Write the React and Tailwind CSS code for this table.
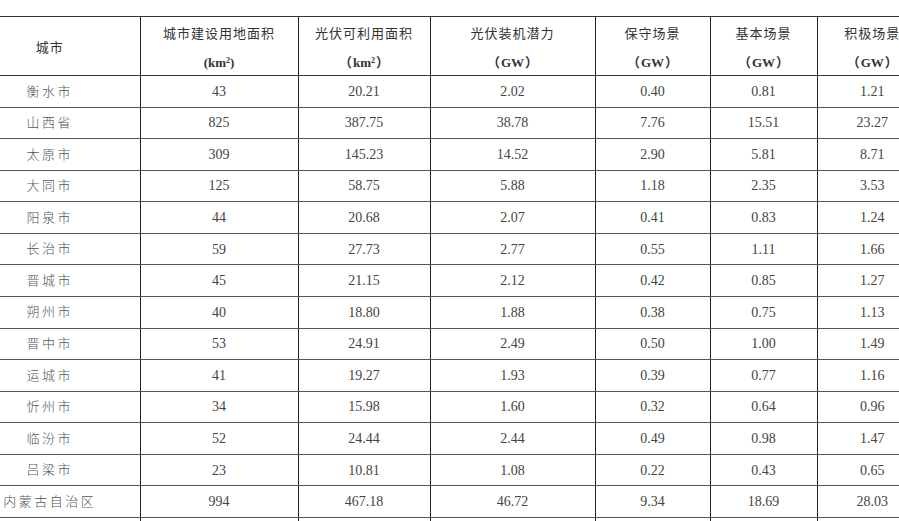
import React from "react";

const rows = [
  ["衡水市", "43", "20.21", "2.02", "0.40", "0.81", "1.21"],
  ["山西省", "825", "387.75", "38.78", "7.76", "15.51", "23.27"],
  ["太原市", "309", "145.23", "14.52", "2.90", "5.81", "8.71"],
  ["大同市", "125", "58.75", "5.88", "1.18", "2.35", "3.53"],
  ["阳泉市", "44", "20.68", "2.07", "0.41", "0.83", "1.24"],
  ["长治市", "59", "27.73", "2.77", "0.55", "1.11", "1.66"],
  ["晋城市", "45", "21.15", "2.12", "0.42", "0.85", "1.27"],
  ["朔州市", "40", "18.80", "1.88", "0.38", "0.75", "1.13"],
  ["晋中市", "53", "24.91", "2.49", "0.50", "1.00", "1.49"],
  ["运城市", "41", "19.27", "1.93", "0.39", "0.77", "1.16"],
  ["忻州市", "34", "15.98", "1.60", "0.32", "0.64", "0.96"],
  ["临汾市", "52", "24.44", "2.44", "0.49", "0.98", "1.47"],
  ["吕梁市", "23", "10.81", "1.08", "0.22", "0.43", "0.65"],
  ["内蒙古自治区", "994", "467.18", "46.72", "9.34", "18.69", "28.03"],
  ["", "", "", "", "", "", ""],
];

const widths = ["w-[140px]", "w-[158px]", "w-[132px]", "w-[165px]", "w-[115px]", "w-[107px]", "w-[110px]"];

const serif = { fontFamily: '"Liberation Serif", "Noto Sans CJK SC", serif' };

function Head({ top, bottom, i }) {
  return (
    <th
      className={`${widths[i]} h-[59px] border-t border-b border-[#333] ${i > 0 ? "border-l border-l-[#222]" : ""} p-0 align-middle font-normal`}
    >
      <div className="flex flex-col items-center leading-[29px] translate-y-[2px]">
        <span className="text-[13px] tracking-[1px] text-[#333]" style={serif}>{top}</span>
        {bottom}
      </div>
    </th>
  );
}

const unit = "text-[13px] font-bold text-[#333] whitespace-nowrap";

function Full({ children }) {
  return (
    <span className={unit}>
      <span className="inline-block w-[17px] text-right pr-[1px]">（</span>
      {children}
      <span className="inline-block w-[17px] text-left pl-[1px]">）</span>
    </span>
  );
}

export default function App() {
  return (
    <div className="w-[899px] h-[521px] overflow-hidden bg-white pt-[16px]" style={serif}>
      <table className="table-fixed border-collapse w-[927px]">
        <thead>
          <tr>
            <th className="w-[140px] h-[59px] border-t border-b border-[#333] p-0 pr-[40px] font-normal align-middle">
              <span className="text-[13px] tracking-[1px] text-[#333] relative top-[1px]">城市</span>
            </th>
            <Head
              i={1}
              top="城市建设用地面积"
              bottom={
                <span className={unit}>
                  (km<sup className="text-[8px]">2</sup>)
                </span>
              }
            />
            <Head
              i={2}
              top="光伏可利用面积"
              bottom={
                <Full>
                  km<sup className="text-[8px]">2</sup>
                </Full>
              }
            />
            <Head i={3} top="光伏装机潜力" bottom={<Full>GW</Full>} />
            <Head i={4} top="保守场景" bottom={<Full>GW</Full>} />
            <Head i={5} top="基本场景" bottom={<Full>GW</Full>} />
            <Head i={6} top="积极场景" bottom={<Full>GW</Full>} />
          </tr>
        </thead>
        <tbody>
          {rows.map((r, ri) => (
            <tr key={ri}>
              {r.map((c, ci) => (
                <td
                  key={ci}
                  className={`h-[31.57px] p-0 text-center align-middle border-b border-[#555] ${ci > 0 ? "border-l border-l-[#222]" : "pr-[40px]"} ${ci === 0 ? "text-[13px] tracking-[2.5px] text-[#555] font-light" : "text-[14px] text-[#444]"}`}
                >
                  {c}
                </td>
              ))}
            </tr>
          ))}
        </tbody>
      </table>
    </div>
  );
}
